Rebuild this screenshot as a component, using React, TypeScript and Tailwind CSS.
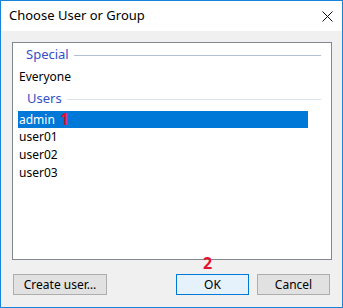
export default function App() {
  const users = ["user01", "user02", "user03"];
  return (
    <div
      className="relative flex h-[308px] w-[343px] flex-col border border-[#1883d7] bg-[#f0f0f0] text-[12px] text-black"
      style={{ fontFamily: '"Noto Sans", "Liberation Sans", sans-serif' }}
    >
      {/* title bar */}
      <div className="flex h-[30px] items-center justify-between bg-white pl-[8px] pr-[9px]">
        <span className="text-[13px]">Choose User or Group</span>
        <svg width="11" height="11" viewBox="0 0 11 11" className="mt-[1px]">
          <path d="M0.5 0.5 L10.5 10.5 M10.5 0.5 L0.5 10.5" stroke="#111" strokeWidth="1" fill="none" />
        </svg>
      </div>

      {/* list box */}
      <div className="mx-[11px] mt-[11px] flex h-[218px] w-[320px] flex-col border border-[#828790] bg-white">
        <div className="mt-[3px] flex h-[18px] items-center pl-[13px] pr-[10px]">
          <span className="text-[13px] text-[#3350c8]">Special</span>
          <div className="ml-[5px] h-px flex-1 bg-[#b3bed8]" />
        </div>
        <div className="mt-[4px] flex h-[18px] items-center pl-[6px]">Everyone</div>
        <div className="mt-[4px] flex h-[18px] items-center pl-[14px] pr-[10px]">
          <span className="text-[13px] text-[#3350c8]">Users</span>
          <div className="ml-[5px] h-px flex-1 bg-[#dde3ee]" />
        </div>
        <div className="relative ml-[5px] mt-[3px] flex h-[17px] w-[290px] items-center bg-[#0078d7] pl-[1px] text-white">
          admin
          <span className="absolute left-[42px] top-[0px] text-[16px] font-bold leading-[17px] text-[#e8112d]">1</span>
        </div>
        {users.map((u) => (
          <div key={u} className="flex h-[18px] items-center pl-[6px]">
            {u}
          </div>
        ))}
      </div>

      {/* buttons */}
      <div className="relative mt-[14px] flex pl-[12px] pr-[12px]">
        <span className="absolute left-[202px] top-[-18px] text-[16px] font-bold leading-[14px] text-[#e8112d]">2</span>
        <button className="flex h-[21px] w-[94px] items-center justify-center border border-[#adadad] bg-[#e1e1e1]">
          Create user…
        </button>
        <button className="ml-[69px] flex h-[21px] w-[73px] items-center justify-center border border-[#0078d7] bg-[#e5f1fb]">
          OK
        </button>
        <button className="ml-[8px] flex h-[21px] w-[73px] items-center justify-center border border-[#adadad] bg-[#e1e1e1]">
          Cancel
        </button>
      </div>
    </div>
  );
}
